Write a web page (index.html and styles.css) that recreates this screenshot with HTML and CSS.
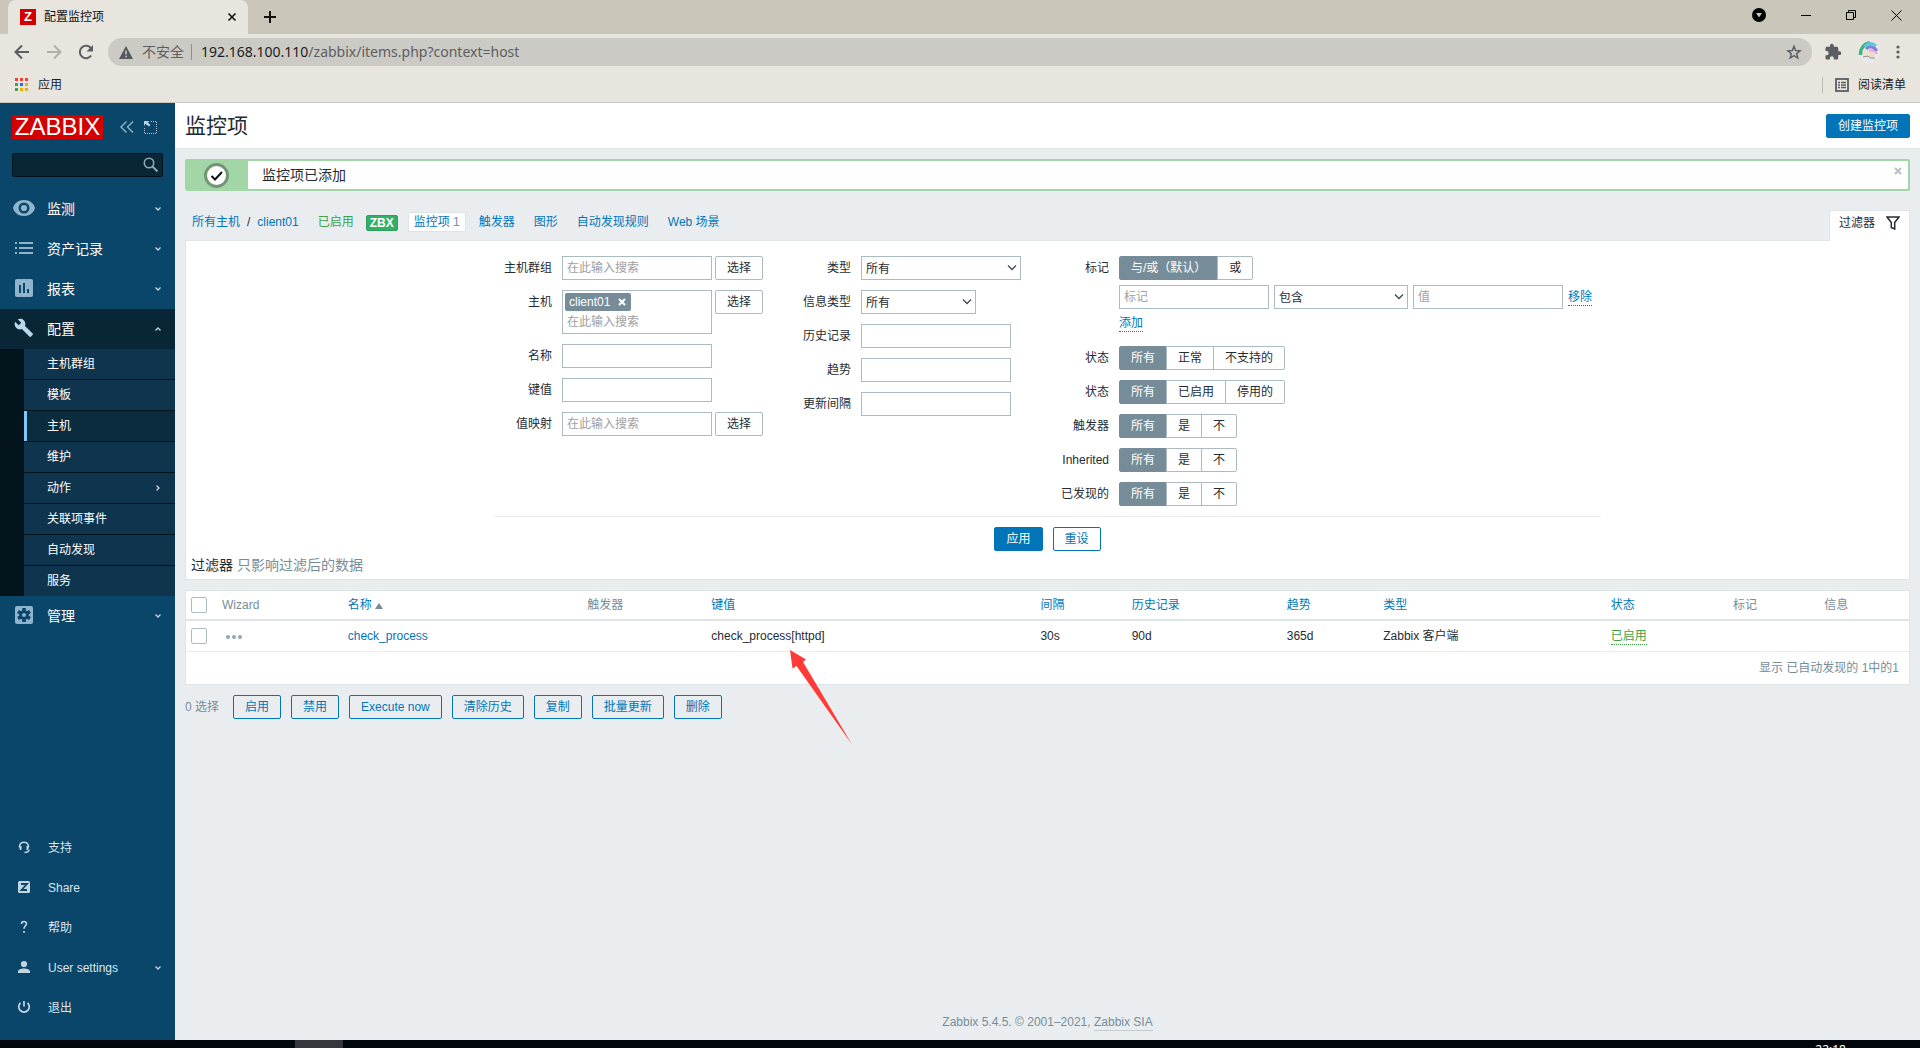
FILE: index.html
```html
<!DOCTYPE html>
<html lang="zh-CN">
<head>
<meta charset="utf-8">
<title>配置监控项</title>
<link rel="stylesheet" href="styles.css">
</head>
<body>
<header class="browser">
  <div class="tabstrip">
    <div class="tab">
      <span class="favicon">Z</span>
      <span class="tab-title">配置监控项</span>
      <button class="icon-btn" aria-label="关闭标签页"><svg width="10" height="10" viewBox="0 0 10 10"><path d="M1.5 1.5l7 7M8.500 1.500l-7 7" stroke="#111" stroke-width="1.600"/></svg></button>
    </div>
    <button class="icon-btn new-tab" aria-label="新标签页"><svg width="12" height="12" viewBox="0 0 12 12"><path d="M6 0v12M0 6h12" stroke="#111" stroke-width="2"/></svg></button>
    <div class="window-controls">
      <button class="icon-btn" aria-label="搜索标签页"><svg width="14" height="14" viewBox="0 0 14 14"><circle cx="7" cy="7" r="7" fill="#000"/><path d="M4 5h6L7 9.500z" fill="#cac6ba"/></svg></button>
      <button class="icon-btn" aria-label="最小化"><svg width="10" height="10" viewBox="0 0 10 10"><path d="M0 5.500h10" stroke="#000"/></svg></button>
      <button class="icon-btn" aria-label="还原"><svg width="10" height="10" viewBox="0 0 10 10" fill="none" stroke="#000"><path d="M.5 2.500h7v7h-7zM2.500 2.500v-2h7v7h-2"/></svg></button>
      <button class="icon-btn" aria-label="关闭"><svg width="11" height="11" viewBox="0 0 11 11"><path d="M.5.5l10 10M10.500.5l-10 10" stroke="#000"/></svg></button>
    </div>
  </div>
  <div class="toolbar">
    <button class="icon-btn" aria-label="后退"><svg width="16" height="16" viewBox="0 0 16 16" fill="none" stroke="#5a5e63" stroke-width="2"><path d="M15 8H2M8 1.500L1.500 8 8 14.500"/></svg></button>
    <button class="icon-btn" aria-label="前进"><svg width="16" height="16" viewBox="0 0 16 16" fill="none" stroke="#b0afab" stroke-width="2"><path d="M1 8h13M8 1.500L14.500 8 8 14.500"/></svg></button>
    <button class="icon-btn" aria-label="重新加载"><svg width="16" height="16" viewBox="0 0 16 16"><path d="M13.200 11.500A6.200 6.200 0 1 1 13 4.300" fill="none" stroke="#5a5e63" stroke-width="2"/><path d="M15 1v6.500H8.500z" fill="#5a5e63"/></svg></button>
    <div class="address">
      <svg width="14" height="13" viewBox="0 0 14 13"><path d="M7 0l7 13H0z" fill="#55585c"/><path d="M7 4.500v4M7 9.800v1.600" stroke="#cbcac5" stroke-width="1.500"/></svg>
      <span class="insecure">不安全</span>
      <span class="url"><span class="url-host">192.168.100.110</span>/zabbix/items.php?context=host</span>
      <button class="icon-btn star" aria-label="为此标签页添加书签"><svg width="16" height="16" viewBox="0 0 24 24"><path d="M12 3.500l2.500 6.200 6.600.5-5.100 4.300 1.600 6.500-5.600-3.500L6.400 21 8 14.500 2.900 10.200l6.600-.5z" fill="none" stroke="#5a5e63" stroke-width="2.200"/></svg></button>
    </div>
    <button class="icon-btn" aria-label="扩展程序"><svg width="18" height="18" viewBox="0 0 24 24" fill="#5a5e63"><path d="M20.500 11H19V7c0-1.100-.9-2-2-2h-4V3.500a2.500 2.500 0 0 0-5 0V5H4c-1.100 0-2 .9-2 2v3.800h1.500a2.700 2.700 0 0 1 0 5.400H2V20c0 1.100.9 2 2 2h3.800v-1.500a2.700 2.700 0 0 1 5.400 0V22H17c1.100 0 2-.9 2-2v-4h1.500a2.500 2.500 0 0 0 0-5z"/></svg></button>
    <button class="icon-btn avatar" aria-label="个人资料"><svg width="22" height="22" viewBox="0 0 22 22"><circle cx="11" cy="11" r="11" fill="#e9e9ea"/><path d="M2.500 14C2 7 7 2 12 2" fill="none" stroke="#3db67f" stroke-width="3.500"/><path d="M7 6c4-5 8-4 11-1" fill="none" stroke="#62c5dc" stroke-width="3"/><path d="M8 8c4-4 8-2 11 2" fill="none" stroke="#7b82dc" stroke-width="3"/><path d="M11 10c4-2 6 0 8 3" fill="none" stroke="#e8a6cc" stroke-width="2"/><path d="M5 8l5 3 1 5-5-1z" fill="#f2e0ce"/><path d="M12 10l5 2-2 5-4-1z" fill="#ecd9c8"/><path d="M5 16l5-1 2 2 5 0" stroke="#9a8f92" fill="none"/></svg></button>
    <button class="icon-btn" aria-label="更多"><svg width="4" height="14" viewBox="0 0 4 14" fill="#5a5e63"><circle cx="2" cy="2" r="1.600"/><circle cx="2" cy="7" r="1.600"/><circle cx="2" cy="12" r="1.600"/></svg></button>
  </div>
  <div class="bookmarks">
    <a class="bookmark" href="#"><svg width="14" height="14" viewBox="0 0 14 14"><path d="M0 0h3v3H0zM5 0h3v3H5zM10 0h3v3h-3z" fill="#ea4335"/><path d="M0 5h3v3H0zM0 10h3v3H0z" fill="#34a853"/><path d="M5 5h3v3H5z" fill="#1a73e8"/><path d="M10 5h3v3h-3zM5 10h3v3H5zM10 10h3v3h-3z" fill="#f9ab00"/></svg>应用</a>
    <a class="bookmark reading-list" href="#"><svg width="14" height="14" viewBox="0 0 14 14" fill="none" stroke="#5a5e63"><rect x="1" y="1" width="12" height="12" stroke-width="1.800"/><path d="M3 4.500h2M6 4.500h5M3 7h2M6 7h5M3 9.500h2M6 9.500h5" stroke-width="1.400"/></svg>阅读清单</a>
  </div>
</header>

<div class="app">
  <aside class="sidebar">
    <div class="brand">
      <a class="logo" href="#">ZABBIX</a>
      <button class="icon-btn" aria-label="折叠侧边栏"><svg width="14" height="12" viewBox="0 0 14 12" fill="none" stroke="#8fb4cc" stroke-width="1.400"><path d="M6.500.5L1 6l5.500 5.500M13 .5L7.500 6l5.500 5.500"/></svg></button>
      <button class="icon-btn" aria-label="隐藏侧边栏"><svg width="13" height="13" viewBox="0 0 13 13"><path d="M.5 7v5.500h12V.5H7" fill="none" stroke="#a9c5d6" stroke-dasharray="1 1"/><path d="M0 0h5.500L4 1.500l2.500 2.500L5 5.500 1.500 3 0 5z" fill="#b6cfde"/></svg></button>
    </div>
    <form class="search">
      <input type="text" aria-label="搜索">
      <button class="icon-btn" type="button" aria-label="搜索"><svg width="16" height="16" viewBox="0 0 16 16" fill="none" stroke="#8fa9b8"><circle cx="6" cy="6" r="4.700" stroke-width="1.600"/><path d="M9.500 9.500l5 5" stroke-width="2"/></svg></button>
    </form>
    <nav class="menu" aria-label="主菜单">
      <a class="menu-item" href="#"><svg class="menu-icon" viewBox="0 0 24 24"><path d="M12 4C6.500 4 2 7.500 1 12c1 4.500 5.500 8 11 8s10-3.500 11-8c-1-4.500-5.500-8-11-8z"/><circle cx="12" cy="12" r="4.300" fill="none" stroke="#0a466a" stroke-width="2.400"/></svg>监测<svg class="chevron" viewBox="0 0 8 8"><path d="M1.500 2.500L4 5l2.500-2.500"/></svg></a>
      <a class="menu-item" href="#"><svg class="menu-icon" viewBox="0 0 24 24"><path d="M3 6h2v2H3zM7 6h14v2H7zM3 11h2v2H3zM7 11h14v2H7zM3 16h2v2H3zM7 16h14v2H7z"/></svg>资产记录<svg class="chevron" viewBox="0 0 8 8"><path d="M1.500 2.500L4 5l2.500-2.500"/></svg></a>
      <a class="menu-item" href="#"><svg class="menu-icon" viewBox="0 0 24 24"><rect x="3" y="3" width="18" height="18" rx="2"/><path d="M8 9v8M12 7v10M16 13v4" stroke="#0a466a" stroke-width="2"/></svg>报表<svg class="chevron" viewBox="0 0 8 8"><path d="M1.500 2.500L4 5l2.500-2.500"/></svg></a>
      <a class="menu-item open" href="#"><svg class="menu-icon" viewBox="0 0 24 24"><path d="M20.700 17.600L13 9.900c.8-1.900.4-4.200-1.200-5.700C10.100 2.600 7.700 2.300 5.700 3.200l3.500 3.500-2.500 2.500L3.100 5.700C2.200 7.700 2.600 10.200 4.200 11.800c1.500 1.600 3.800 2 5.700 1.200l7.700 7.700c.4.400.9.400 1.200 0l1.900-1.900c.4-.3.4-.9 0-1.200z"/></svg>配置<svg class="chevron" viewBox="0 0 8 8"><path d="M1.500 5.500L4 3l2.500 2.500"/></svg></a>
      <div class="submenu">
        <a href="#">主机群组</a>
        <a href="#">模板</a>
        <a class="current" href="#">主机</a>
        <a href="#">维护</a>
        <a href="#">动作<svg class="chevron" viewBox="0 0 8 8"><path d="M2.500 1.500L5 4 2.500 6.500"/></svg></a>
        <a href="#">关联项事件</a>
        <a href="#">自动发现</a>
        <a href="#">服务</a>
      </div>
      <a class="menu-item" href="#"><svg class="menu-icon" viewBox="0 0 24 24"><rect x="3" y="3" width="18" height="18" rx="2"/><path d="M12 5v14M6 8.500l12 7M18 8.500l-12 7" stroke="#0a466a" stroke-width="3.600"/><circle cx="12" cy="12" r="4.800" fill="#0a466a"/><circle cx="12" cy="12" r="2"/></svg>管理<svg class="chevron" viewBox="0 0 8 8"><path d="M1.500 2.500L4 5l2.500-2.500"/></svg></a>
    </nav>
    <nav class="menu user-menu" aria-label="用户菜单">
      <a class="menu-item" href="#"><svg class="menu-icon" viewBox="0 0 24 24"><path d="M7.500 12v-1a4.600 4.600 0 0 1 9 0v1M17 14.500c0 2-1.800 3-4.500 3" fill="none" stroke="#c3d5e0" stroke-width="1.500"/><path d="M6.700 11h2.800v4H8zM17.300 11h-2.800v4H16z"/></svg>支持</a>
      <a class="menu-item" href="#"><svg class="menu-icon" viewBox="0 0 24 24"><rect x="6" y="6" width="12" height="12" rx="1.500"/><path d="M9 9h6l-5.500 6H15" fill="none" stroke="#0a466a" stroke-width="1.800"/></svg>Share</a>
      <a class="menu-item" href="#"><svg class="menu-icon" viewBox="0 0 24 24"><path d="M9.500 9c0-3.200 5-3.200 5-.3 0 2-2.500 2.300-2.500 5M12 16v2" fill="none" stroke="#c3d5e0" stroke-width="1.600"/></svg>帮助</a>
      <a class="menu-item" href="#"><svg class="menu-icon" viewBox="0 0 24 24"><circle cx="12" cy="9" r="3.100"/><path d="M6 18v-1.500C6 14.500 9 13.500 12 13.500s6 1 6 3V18z"/></svg>User settings<svg class="chevron" viewBox="0 0 8 8"><path d="M1.500 2.500L4 5l2.500-2.500"/></svg></a>
      <a class="menu-item" href="#"><svg class="menu-icon" viewBox="0 0 24 24" ><path d="M8.500 7.800a5.300 5.300 0 1 0 7 0M12 6v5.500" fill="none" stroke="#c3d5e0" stroke-width="1.700"/></svg>退出</a>
    </nav>
  </aside>

  <div class="page">
    <header class="page-header">
      <h1>监控项</h1>
      <button class="btn primary">创建监控项</button>
    </header>
    <main>
      <div class="message" role="status">
        <span class="message-icon"><svg width="25" height="25" viewBox="0 0 25 25"><circle cx="12.500" cy="12.500" r="11" fill="#fff" stroke="#729674" stroke-width="3"/><path d="M7.500 13l3.500 3.500 7-7.500" fill="none" stroke="#111" stroke-width="2"/></svg></span>
        <span class="message-text">监控项已添加</span>
        <button class="icon-btn" aria-label="关闭"><svg width="8" height="8" viewBox="0 0 8 8"><path d="M1 1l6 6M7 1L1 7" stroke="#b5c0c7" stroke-width="2"/></svg></button>
      </div>

      <div class="nav-row">
        <nav class="crumbs" aria-label="导航">
          <a href="#">所有主机</a><span class="slash">/</span><a href="#">client01</a>
          <span class="enabled">已启用</span>
          <span class="zbx">ZBX</span>
          <a class="active" href="#">监控项 <sup>1</sup></a>
          <a href="#">触发器</a>
          <a href="#">图形</a>
          <a href="#">自动发现规则</a>
          <a href="#">Web 场景</a>
        </nav>
        <a class="filter-tab" href="#">过滤器<svg width="14" height="14" viewBox="0 0 14 14"><path d="M1 1h12L8.700 6.500V13L5.300 11.500V6.500z" fill="none" stroke="#1f2c33" stroke-width="1.500"/></svg></a>
      </div>

      <form class="filter">
        <div class="filter-fields">
          <div class="fields">
            <label for="groups">主机群组</label>
            <div class="inline"><input id="groups" type="text" placeholder="在此输入搜索"><button type="button" class="btn grey">选择</button></div>
            <label for="hosts">主机</label>
            <div class="inline">
              <div class="multiselect">
                <span class="chip">client01<button type="button" class="icon-btn" aria-label="移除 client01"><svg width="8" height="8" viewBox="0 0 8 8"><path d="M1 1l6 6M7 1L1 7" stroke="#fff" stroke-width="2"/></svg></button></span>
                <input id="hosts" type="text" placeholder="在此输入搜索">
              </div>
              <button type="button" class="btn grey">选择</button>
            </div>
            <label for="name">名称</label>
            <input id="name" type="text">
            <label for="key">键值</label>
            <input id="key" type="text">
            <label for="valuemap">值映射</label>
            <div class="inline"><input id="valuemap" type="text" placeholder="在此输入搜索"><button type="button" class="btn grey">选择</button></div>
          </div>

          <div class="fields">
            <label for="type">类型</label>
            <span class="select wide"><select id="type"><option>所有</option></select><svg viewBox="0 0 10 6"><path d="M1 .5l4 4 4-4"/></svg></span>
            <label for="info">信息类型</label>
            <span class="select narrow"><select id="info"><option>所有</option></select><svg viewBox="0 0 10 6"><path d="M1 .5l4 4 4-4"/></svg></span>
            <label for="history">历史记录</label>
            <input id="history" type="text">
            <label for="trends">趋势</label>
            <input id="trends" type="text">
            <label for="delay">更新间隔</label>
            <input id="delay" type="text">
          </div>

          <div class="fields">
            <span class="label" id="l-tags">标记</span>
            <div class="tags">
              <div class="segmented" role="radiogroup" aria-labelledby="l-tags">
                <input type="radio" name="tags" id="tags0" checked><label for="tags0">与/或（默认）</label>
                <input type="radio" name="tags" id="tags1"><label for="tags1">或</label>
              </div>
              <div class="tag-row">
                <input type="text" placeholder="标记" aria-label="标记">
                <span class="select medium"><select aria-label="运算符"><option>包含</option></select><svg viewBox="0 0 10 6"><path d="M1 .5l4 4 4-4"/></svg></span>
                <input type="text" placeholder="值" aria-label="值">
                <a class="dotted" href="#">移除</a>
              </div>
              <div class="tag-add"><a class="dotted" href="#">添加</a></div>
            </div>
            <span class="label" id="l-state">状态</span>
            <div class="segmented" role="radiogroup" aria-labelledby="l-state">
              <input type="radio" name="state" id="state0" checked><label for="state0">所有</label>
              <input type="radio" name="state" id="state1"><label for="state1">正常</label>
              <input type="radio" name="state" id="state2"><label for="state2">不支持的</label>
            </div>
            <span class="label" id="l-status">状态</span>
            <div class="segmented" role="radiogroup" aria-labelledby="l-status">
              <input type="radio" name="status" id="status0" checked><label for="status0">所有</label>
              <input type="radio" name="status" id="status1"><label for="status1">已启用</label>
              <input type="radio" name="status" id="status2"><label for="status2">停用的</label>
            </div>
            <span class="label" id="l-trig">触发器</span>
            <div class="segmented" role="radiogroup" aria-labelledby="l-trig">
              <input type="radio" name="trig" id="trig0" checked><label for="trig0">所有</label>
              <input type="radio" name="trig" id="trig1"><label for="trig1">是</label>
              <input type="radio" name="trig" id="trig2"><label for="trig2">不</label>
            </div>
            <span class="label" id="l-inh">Inherited</span>
            <div class="segmented" role="radiogroup" aria-labelledby="l-inh">
              <input type="radio" name="inh" id="inh0" checked><label for="inh0">所有</label>
              <input type="radio" name="inh" id="inh1"><label for="inh1">是</label>
              <input type="radio" name="inh" id="inh2"><label for="inh2">不</label>
            </div>
            <span class="label" id="l-disc">已发现的</span>
            <div class="segmented" role="radiogroup" aria-labelledby="l-disc">
              <input type="radio" name="disc" id="disc0" checked><label for="disc0">所有</label>
              <input type="radio" name="disc" id="disc1"><label for="disc1">是</label>
              <input type="radio" name="disc" id="disc2"><label for="disc2">不</label>
            </div>
          </div>
        </div>
        <div class="filter-buttons">
          <button type="button" class="btn primary">应用</button>
          <button type="button" class="btn outline">重设</button>
        </div>
        <p class="filter-note"><strong>过滤器</strong> 只影响过滤后的数据</p>
      </form>

      <div class="table-box">
        <table>
          <colgroup><col class="c-check"><col class="c-wizard"><col class="c-name"><col class="c-trig"><col class="c-key"><col class="c-int"><col class="c-hist"><col class="c-trend"><col class="c-type"><col class="c-status"><col class="c-tags"><col></colgroup>
          <thead>
            <tr>
              <th><input type="checkbox" aria-label="全选"></th>
              <th>Wizard</th>
              <th><a href="#">名称<span class="sort-asc"></span></a></th>
              <th>触发器</th>
              <th><a href="#">键值</a></th>
              <th><a href="#">间隔</a></th>
              <th><a href="#">历史记录</a></th>
              <th><a href="#">趋势</a></th>
              <th><a href="#">类型</a></th>
              <th><a href="#">状态</a></th>
              <th>标记</th>
              <th>信息</th>
            </tr>
          </thead>
          <tbody>
            <tr>
              <td><input type="checkbox" aria-label="check_process"></td>
              <td><button class="icon-btn dots" aria-label="菜单"><svg width="16" height="4" viewBox="0 0 16 4" fill="#97a5ae"><circle cx="2" cy="2" r="2"/><circle cx="8" cy="2" r="2"/><circle cx="14" cy="2" r="2"/></svg></button></td>
              <td><a href="#">check_process</a></td>
              <td></td>
              <td class="key">check_process[httpd]<svg class="arrow" width="64" height="96" viewBox="0 0 64 96"><path d="M0 0l16 9.500-3 2.500L62 94.500 6.500 16 2.500 18.500z" fill="#ff3b38"/></svg></td>
              <td>30s</td>
              <td>90d</td>
              <td>365d</td>
              <td>Zabbix 客户端</td>
              <td><a class="dotted enabled" href="#">已启用</a></td>
              <td></td>
              <td></td>
            </tr>
          </tbody>
        </table>
        <div class="table-footer">显示 已自动发现的 1中的1</div>
      </div>

      <div class="actions">
        <span class="count">0 选择</span>
        <button class="btn outline">启用</button>
        <button class="btn outline">禁用</button>
        <button class="btn outline">Execute now</button>
        <button class="btn outline">清除历史</button>
        <button class="btn outline">复制</button>
        <button class="btn outline">批量更新</button>
        <button class="btn outline">删除</button>
      </div>
    </main>
    <footer class="page-footer">Zabbix 5.4.5. © 2001–2021, <a href="#">Zabbix SIA</a></footer>
  </div>
</div>

<div class="taskbar"><span class="task"></span><span class="clock">22:18</span></div>
</body>
</html>
```
FILE: styles.css
```css
* {
  box-sizing: border-box;
}

body {
  margin: 0;
  min-height: 100vh;
  display: flex;
  flex-direction: column;
  font: 12px/18px "Liberation Sans", "Noto Sans CJK SC", sans-serif;
  color: #1f2c33;
  background: #e9edf0;
}

a {
  color: #0275b8;
  text-decoration: none;
}

svg {
  flex: none;
}

button,
input,
select {
  font: inherit;
  color: inherit;
}

.icon-btn {
  display: flex;
  align-items: center;
  justify-content: center;
  padding: 0;
  border: 0;
  background: none;
}

/* Browser window */
.browser {
  background: #e8e5de;
  border-bottom: 1px solid #c9c6be;
  font-family: "Noto Sans", "Noto Sans CJK SC", sans-serif;
}

.tabstrip {
  display: flex;
  align-items: center;
  height: 34px;
  background: #cac6ba;
}

.tab {
  display: flex;
  align-items: center;
  align-self: stretch;
  width: 240px;
  margin-left: 8px;
  padding: 0 11px 0 12px;
  gap: 8px;
  border-radius: 8px 8px 0 0;
  background: #e8e5de;
}

.favicon {
  width: 16px;
  height: 16px;
  background: #d40000;
  color: #fff;
  font: bold 13px/16px "Liberation Sans", sans-serif;
  text-align: center;
}

.tab-title {
  flex: 1;
  color: #111;
}

.new-tab {
  margin-left: 16px;
}

.window-controls {
  display: flex;
  align-items: center;
  gap: 35px;
  margin-left: auto;
  padding: 0 18px 4px 0;
}

.toolbar {
  display: flex;
  align-items: center;
  gap: 16px;
  height: 36px;
  padding: 0 20px 0 14px;
}

.address {
  display: flex;
  align-items: center;
  flex: 1;
  height: 28px;
  margin: 0 -4px 0 -2px;
  padding: 0 10px 0 11px;
  border-radius: 14px;
  background: #cbcac5;
  color: #5c5e60;
  font-size: 14px;
}

.insecure {
  margin: 0 9px;
  padding-right: 7px;
  border-right: 1px solid #8f8f8b;
  line-height: 16px;
}

.url {
  flex: 1;
}

.url-host {
  color: #1c1d1e;
}

.bookmarks {
  display: flex;
  justify-content: space-between;
  align-items: center;
  height: 32px;
  padding: 0 14px 2px 15px;
}

.bookmark {
  display: flex;
  align-items: center;
  gap: 9px;
  color: #202124;
}

.reading-list {
  padding-left: 12px;
  border-left: 1px solid #bfbcb5;
  line-height: 16px;
}

/* Application */
.app {
  display: flex;
  flex: 1;
}

.sidebar {
  display: flex;
  flex-direction: column;
  flex: none;
  width: 175px;
  padding-bottom: 12px;
  background: #0a466a;
}

.brand {
  display: flex;
  align-items: center;
  gap: 10px;
  padding: 12px 12px 0;
}

.logo {
  width: 91px;
  margin-right: 7px;
  background: #d40000;
  color: #fff;
  font-size: 24px;
  line-height: 24px;
  text-align: center;
}

.search {
  display: flex;
  margin: 14px 12px 12px;
  padding-right: 3px;
  border: 1px solid #04141f;
  border-radius: 2px;
  background: #092636;
}

.search input {
  flex: 1;
  width: 0;
  height: 22px;
  border: 0;
  background: none;
  color: #fff;
}

.menu-item {
  display: flex;
  align-items: center;
  height: 40px;
  padding: 0 13px 0 12px;
  color: #fff;
  font-size: 14px;
}

.menu-icon {
  width: 24px;
  height: 24px;
  margin: 0 11px 2px 0;
  fill: #8fb4cc;
}

.menu-item.open {
  background: #092636;
}

.open .menu-icon {
  fill: #b9d6ea;
}

.chevron {
  width: 8px;
  height: 8px;
  margin-left: auto;
  fill: none;
  stroke: #c3d5e0;
  stroke-width: 1.3;
}

.submenu {
  display: flex;
  flex-direction: column;
  gap: 1px;
  padding-left: 24px;
  background: #04141d;
}

.submenu a {
  display: flex;
  align-items: center;
  height: 30px;
  padding: 0 13px 0 20px;
  border-left: 3px solid transparent;
  background: #0f344d;
  color: #fff;
}

.submenu .current {
  border-color: #7fc8fb;
  background: #0b2b3f;
}

.user-menu {
  margin-top: auto;
}

.user-menu .menu-item {
  color: #d9e5ec;
  font-size: 12px;
}

.user-menu .menu-icon {
  margin-right: 12px;
  fill: #c3d5e0;
}

.page {
  display: flex;
  flex-direction: column;
  flex: 1;
  min-width: 0;
}

.page-header {
  display: flex;
  align-items: center;
  justify-content: space-between;
  height: 46px;
  padding: 0 10px;
  border-bottom: 1px solid #dfe4e7;
  background: #fff;
}

h1 {
  margin: 0;
  font-size: 21px;
  font-weight: 400;
  line-height: 24px;
}

.btn {
  height: 24px;
  padding: 0 11px;
  border: 1px solid #0275b8;
  border-radius: 2px;
  line-height: 22px;
  white-space: nowrap;
}

.primary {
  background: #0275b8;
  color: #fff;
}

.outline {
  background: transparent;
  color: #0275b8;
}

.grey {
  border-color: #acbbc2;
  background: #fff;
}

main {
  flex: 1;
  padding: 10px 10px 0;
}

.message {
  display: flex;
  height: 32px;
  border: 2px solid #a3d6a7;
  border-left: 0;
  border-radius: 2px;
  background: #fff;
}

.message-icon {
  display: flex;
  align-items: center;
  justify-content: center;
  width: 63px;
  background: #a3d6a7;
}

.message-text {
  flex: 1;
  padding-left: 14px;
  font-size: 14px;
  line-height: 28px;
}

.message .icon-btn {
  margin: 6px 6px 0 0;
  align-self: flex-start;
}

.nav-row {
  display: flex;
  align-items: flex-start;
  justify-content: space-between;
  margin-top: 19px;
}

.crumbs {
  display: flex;
  align-items: center;
  gap: 7px;
  padding: 2px 0 0 1px;
}

.crumbs a,
.crumbs .enabled {
  padding: 1px 6px;
}

.crumbs .slash {
  margin: 0 -6px;
}

.crumbs .active {
  border: 1px solid #dfe4e7;
  background: #fff;
  padding: 0 5px;
}

.crumbs sup {
  vertical-align: baseline;
  font-size: 12px;
  color: #768d99;
}

.enabled {
  color: #429e47;
}

.zbx {
  margin: 2px 3px 0 -1px;
  padding: 0 3px;
  border: 1px solid #2f9f5e;
  border-radius: 2px;
  background: #34af67;
  color: #fff;
  font-weight: 700;
  line-height: 14px;
}

.filter-tab {
  display: flex;
  align-items: center;
  gap: 11px;
  height: 31px;
  margin-bottom: -1px;
  padding: 0 9px 6px;
  border: 1px solid #dfe4e7;
  border-bottom: 0;
  background: #fff;
  color: #1f2c33;
  z-index: 1;
}

.filter {
  padding-top: 15px;
  border: 1px solid #dfe4e7;
  background: #fff;
}

.filter-fields {
  display: flex;
  gap: 40px;
  width: max-content;
  margin: 0 auto;
  padding: 0 9px 10px 10px;
  border-bottom: 1px solid #e9edf0;
}

.fields {
  display: grid;
  grid-template-columns: auto auto;
  gap: 10px;
  align-content: start;
  justify-items: start;
}

.fields > label,
.label {
  justify-self: end;
  line-height: 24px;
}

.fields input[type="text"] {
  width: 150px;
  height: 24px;
  padding: 0 4px;
  border: 1px solid #acbbc2;
  background: #fff;
}

input::placeholder {
  color: #a0a0a0;
  opacity: 1;
}

.inline {
  display: flex;
  align-items: flex-start;
  gap: 3px;
}

.multiselect {
  width: 150px;
  height: 44px;
  padding: 2px;
  border: 1px solid #acbbc2;
}

.multiselect input[type="text"] {
  display: block;
  width: 144px;
  height: 20px;
  padding: 1px 2px 0;
  border: 0;
}

.chip {
  display: flex;
  align-items: center;
  gap: 8px;
  width: max-content;
  padding: 0 5px 0 4px;
  border-radius: 2px;
  background: #768d99;
  color: #fff;
}

.select {
  position: relative;
}

.wide {
  width: 160px;
}

.narrow {
  width: 115px;
}

.medium {
  width: 134px;
}

select {
  appearance: none;
  display: block;
  width: 100%;
  height: 24px;
  padding: 2px 4px 0;
  border: 1px solid #acbbc2;
  border-radius: 0;
  background: #fff;
}

.select svg {
  position: absolute;
  top: 9px;
  right: 4px;
  width: 10px;
  height: 6px;
  fill: none;
  stroke: #3c4a52;
  stroke-width: 1.3;
}

.tags {
  display: flex;
  flex-direction: column;
  gap: 5px;
}

.tag-row {
  display: flex;
  align-items: center;
  gap: 5px;
}

.tag-add {
  height: 22px;
}

.dotted {
  display: inline-block;
  border-bottom: 1px dotted currentColor;
  line-height: 16px;
}

.segmented {
  position: relative;
  display: flex;
}

.segmented input {
  position: absolute;
  margin: 0;
  opacity: 0;
}

.segmented label {
  height: 24px;
  margin-right: -1px;
  padding: 0 11px;
  border: 1px solid #acbbc2;
  line-height: 22px;
}

.segmented label:first-of-type {
  border-radius: 2px 0 0 2px;
}

.segmented label:last-of-type {
  border-radius: 0 2px 2px 0;
}

.segmented input:checked + label {
  border-color: #768d99;
  background: #768d99;
  color: #fff;
}

.filter-buttons {
  display: flex;
  justify-content: center;
  gap: 10px;
  padding-top: 10px;
}

.filter-note {
  margin: 4px 5px;
  color: #768d99;
  font-size: 14px;
  line-height: 20px;
}

.filter-note strong {
  color: #1f2c33;
  font-weight: 400;
}

.table-box {
  margin-top: 10px;
  border: 1px solid #dfe4e7;
  background: #fff;
}

table {
  width: 100%;
  table-layout: fixed;
  border-collapse: collapse;
}

th,
td {
  padding: 0 5px;
  text-align: left;
  font-weight: 400;
}

th {
  height: 29px;
  border-bottom: 2px solid #dfe4e7;
  color: #768d99;
}

td {
  height: 31px;
  border-bottom: 1px solid #e9edf0;
}

.c-check { width: 31px; }
.c-wizard { width: 7.3%; }
.c-name { width: 13.9%; }
.c-trig { width: 7.2%; }
.c-key { width: 19.1%; }
.c-int { width: 5.3%; }
.c-hist { width: 9%; }
.c-trend { width: 5.6%; }
.c-type { width: 13.2%; }
.c-status { width: 7.1%; }
.c-tags { width: 5.3%; }

input[type="checkbox"] {
  appearance: none;
  display: block;
  width: 16px;
  height: 16px;
  margin: 0;
  border: 1px solid #acbbc2;
  border-radius: 2px;
  background: #fff;
}

.sort-asc {
  display: inline-block;
  margin-left: 3px;
  border: 4px solid transparent;
  border-top: 0;
  border-bottom: 6px solid #768d99;
}

.dots {
  margin: 3px 0 0 4px;
}

.key {
  position: relative;
}

.arrow {
  position: absolute;
  top: 29px;
  left: 84px;
}

.table-footer {
  padding: 7px 10px;
  color: #768d99;
  text-align: right;
}

.actions {
  display: flex;
  align-items: center;
  gap: 10px;
  margin-top: 10px;
}

.count {
  margin-right: 4px;
  color: #768d99;
}

.page-footer {
  padding: 0 0 9px;
  color: #768d99;
  text-align: center;
}

.page-footer a {
  display: inline-block;
  border-bottom: 1px solid #c3cbd0;
  color: inherit;
  line-height: 16px;
}

/* Top edge of the desktop taskbar */
.taskbar {
  display: flex;
  justify-content: space-between;
  height: 8px;
  padding: 0 74px 0 295px;
  overflow: hidden;
  background: #02070d;
}

.task {
  width: 48px;
  background: #34373c;
}

.clock {
  padding-top: 3px;
  color: #fff;
  font-family: "Noto Sans", sans-serif;
  line-height: 14px;
}
```
